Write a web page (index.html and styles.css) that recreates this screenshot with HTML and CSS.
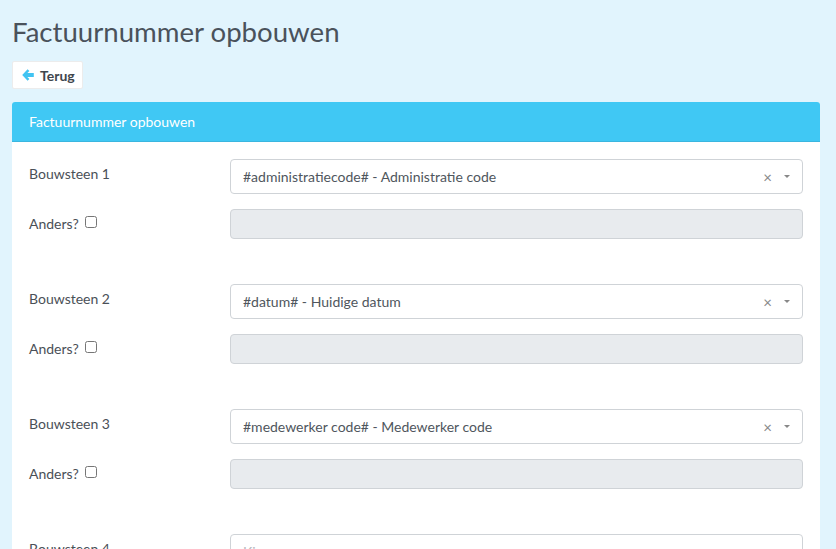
FILE: index.html
```html
<!DOCTYPE html>
<html lang="nl">
<head>
    <meta charset="UTF-8">
    <meta name="viewport" content="width=device-width, initial-scale=1.0">
    <title>Factuurnummer opbouwen</title>
    <link rel="stylesheet" href="styles.css">
</head>
<body>

    <h1 class="page-title">Factuurnummer opbouwen</h1>

    <a class="back-btn" href="#">
        <svg width="12" height="12" viewBox="0 0 12 12">
            <path d="M5.6 0.3 L7.4 2.1 L5.4 4 L11.8 4 L11.8 8 L5.4 8 L7.4 9.9 L5.6 11.7 L0.2 6 Z" fill="#41c4f2"/>
        </svg>
        Terug
    </a>

    <div class="card">
        <div class="card-header">Factuurnummer opbouwen</div>
        <div class="card-body">

            <div class="block">
                <div class="row">
                    <label class="label">Bouwsteen 1</label>
                    <div class="select">
                        <span class="select-value">#administratiecode# - Administratie code</span>
                        <span class="select-clear">&times;</span>
                        <span class="select-caret"></span>
                    </div>
                </div>
                <div class="row">
                    <label class="label">Anders? <input type="checkbox" class="check"></label>
                    <input type="text" class="input" disabled>
                </div>
            </div>

            <div class="block">
                <div class="row">
                    <label class="label">Bouwsteen 2</label>
                    <div class="select">
                        <span class="select-value">#datum# - Huidige datum</span>
                        <span class="select-clear">&times;</span>
                        <span class="select-caret"></span>
                    </div>
                </div>
                <div class="row">
                    <label class="label">Anders? <input type="checkbox" class="check"></label>
                    <input type="text" class="input" disabled>
                </div>
            </div>

            <div class="block">
                <div class="row">
                    <label class="label">Bouwsteen 3</label>
                    <div class="select">
                        <span class="select-value">#medewerker code# - Medewerker code</span>
                        <span class="select-clear">&times;</span>
                        <span class="select-caret"></span>
                    </div>
                </div>
                <div class="row">
                    <label class="label">Anders? <input type="checkbox" class="check"></label>
                    <input type="text" class="input" disabled>
                </div>
            </div>

            <div class="block">
                <div class="row">
                    <label class="label">Bouwsteen 4</label>
                    <div class="select">
                        <span class="select-value placeholder">Kies...</span>
                        <span class="select-caret"></span>
                    </div>
                </div>
            </div>

        </div>
    </div>

</body>
</html>
```

FILE: styles.css
```css
* {
    margin: 0;
    padding: 0;
    box-sizing: border-box;
}

body {
    background-color: #e1f4fd;
    font-family: Lato, "Open Sans", sans-serif;
    color: #4f565d;
    padding: 14px 16px 0 12px;
    overflow: hidden;
}

.page-title {
    font-size: 27.6px;
    font-weight: normal;
    color: #4a525b;
    line-height: 36px;
    margin-bottom: 11px;
}

.back-btn {
    display: inline-flex;
    align-items: center;
    gap: 6px;
    height: 28px;
    padding: 0 7px 0 9px;
    background: white;
    border: 1px solid #ececec;
    border-radius: 2px;
    color: #3f464d;
    font-size: 14px;
    font-weight: bold;
    text-decoration: none;
    vertical-align: top;
}

.card {
    margin-top: 13px;
    background: white;
    border-radius: 3px 3px 0 0;
}

.card-header {
    background: #40c8f4;
    color: white;
    font-size: 14px;
    height: 40px;
    line-height: 40px;
    padding: 0 17px;
    border-radius: 3px 3px 0 0;
    border-bottom: 1px solid #3bb6df;
}

.card-body {
    padding: 17px 17px 0 17px;
}

.block {
    display: flex;
    flex-direction: column;
    gap: 15px;
    margin-bottom: 45px;
}

.row {
    display: flex;
    align-items: flex-start;
}

.label {
    width: 201px;
    font-size: 14px;
    color: #4a5057;
    padding-top: 6px;
    display: flex;
    align-items: center;
    gap: 6px;
}

.check {
    width: 12px;
    height: 12px;
    margin-top: -3px;
}

.select {
    flex: 1;
    height: 35px;
    display: flex;
    align-items: center;
    padding: 0 12px;
    border: 1px solid #cfd3d7;
    border-radius: 4px;
    background: white;
    font-size: 14px;
    color: #4f565d;
}

.select-value {
    flex: 1;
}

.placeholder {
    color: #b5b9bd;
}

.select-clear {
    color: #888;
    font-size: 15px;
    margin-right: 12px;
}

.select-caret {
    width: 0;
    height: 0;
    border-left: 3px solid transparent;
    border-right: 3px solid transparent;
    border-top: 3px solid #888;
}

.input {
    flex: 1;
    height: 30px;
    border: 1px solid #cfd3d7;
    border-radius: 4px;
    background: #e8ebee;
}
```
